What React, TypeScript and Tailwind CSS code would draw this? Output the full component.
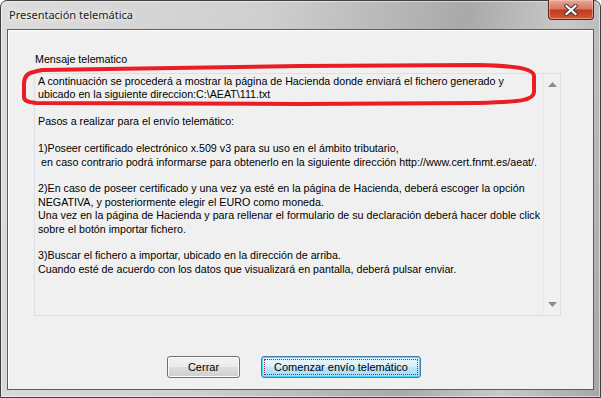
import React from "react";

const lines = [
  "A continuación se procederá a mostrar la página de Hacienda donde enviará el fichero generado y",
  "ubicado en la siguiente direccion:C:\\AEAT\\111.txt",
  "",
  "Pasos a realizar para el envío telemático:",
  "",
  "1)Poseer certificado electrónico x.509 v3 para su uso en el ámbito tributario,",
  " en caso contrario podrá informarse para obtenerlo en la siguiente dirección http://www.cert.fnmt.es/aeat/.",
  "",
  "2)En caso de poseer certificado y una vez ya esté en la página de Hacienda, deberá escoger la opción",
  "NEGATIVA, y posteriormente elegir el EURO como moneda.",
  "Una vez en la página de Hacienda y para rellenar el formulario de su declaración deberá hacer doble click",
  "sobre el botón importar fichero.",
  "",
  "3)Buscar el fichero a importar, ubicado en la dirección de arriba.",
  "Cuando esté de acuerdo con los datos que visualizará en pantalla, deberá pulsar enviar.",
];

function CloseButton() {
  return (
    <div className="flex h-[20px] w-[46px] items-center justify-center rounded-b-[4px] border border-t-0 border-[#5b2418] bg-[linear-gradient(to_bottom,#e9a894_0%,#d9785f_45%,#c0391f_55%,#d4583a_100%)] shadow-[inset_0_0_0_1px_rgba(255,220,210,0.45)]">
      <svg width="14" height="12" viewBox="0 0 14 12">
        <path d="M2.5 2 L11.5 10 M11.5 2 L2.5 10" stroke="#3a3a3a" strokeWidth="4.2" strokeLinecap="square" />
        <path d="M2.5 2 L11.5 10 M11.5 2 L2.5 10" stroke="#ffffff" strokeWidth="2.2" strokeLinecap="square" />
      </svg>
    </div>
  );
}

function Arrow({ up }: { up?: boolean }) {
  return (
    <svg width="9" height="5" viewBox="0 0 9 5">
      <path d={up ? "M0 5 L4.5 0 L9 5 Z" : "M0 0 L4.5 5 L9 0 Z"} fill="#8d8d8d" />
    </svg>
  );
}

export default function App() {
  return (
    <div className="relative h-[398px] w-[601px] overflow-hidden bg-white font-['Liberation_Sans',Arial,sans-serif]">
      <div className="flex h-full w-full flex-col rounded-t-[7px] border border-[#3f3f3f] bg-[linear-gradient(100deg,#dcdcdc_0%,#cfcfcf_40%,#a9a9a9_70%,#c9c9c9_85%,#a6a6a6_100%)] px-[6px] pb-[7px] shadow-[inset_0_0_0_1px_rgba(255,255,255,0.5)]">
        <div className="flex h-[28px] items-start justify-between">
          <div className="pl-[2px] pt-[6px] font-['Noto_Sans',sans-serif] text-[11px] leading-[15px] text-[#1c1c1c] [text-shadow:0_0_8px_#ffffff,0_0_4px_#ffffff]">
            Presentación telemática
          </div>
          <div className="-mt-px">
            <CloseButton />
          </div>
        </div>
        <div className="flex flex-1 flex-col border border-[#5c5c5c] bg-[#f0f0f0] text-[10.7px] text-black shadow-[inset_1px_1px_0_#ffffff]">
          <div className="ml-[27px] mt-[23px] leading-[13px]">Mensaje telematico</div>
          <div className="ml-[26px] mt-[7px] flex h-[243px] w-[527px] border border-[#dcdfe6] bg-[#f0f0f0]">
            <div className="flex-1 overflow-hidden pl-[3px] pt-[1px] leading-[13.43px]">
              {lines.map((l, i) => (
                <div key={i} className="h-[13.43px] whitespace-pre">
                  {l}
                </div>
              ))}
            </div>
            <div className="flex w-[17px] flex-col items-center justify-between border-l border-[#e6e6e6] bg-[#f0f0f0] py-[8px]">
              <Arrow up />
              <Arrow />
            </div>
          </div>
          <div className="mt-[40px] flex gap-[21px] pl-[159px] text-[11px]">
            <div className="flex h-[22px] w-[73px] items-center justify-center rounded-[3px] border border-[#707070] bg-[linear-gradient(to_bottom,#f2f2f2_0%,#ebebeb_50%,#dddddd_50%,#cfcfcf_100%)] shadow-[inset_0_0_0_1px_#fcfcfc]">
              Cerrar
            </div>
            <div className="flex h-[22px] w-[160px] items-center justify-center rounded-[3px] border border-[#3c7fb1] bg-[linear-gradient(to_bottom,#eaf6fd_0%,#d9f0fc_50%,#bee6fd_50%,#a7d9f5_100%)] p-[2px] shadow-[inset_0_0_0_1px_#48d4ff]">
              <div className="flex h-full w-full items-center justify-center border border-dotted border-[#7a3b3b]">
                Comenzar envío telemático
              </div>
            </div>
          </div>
        </div>
      </div>
      <svg className="pointer-events-none absolute left-0 top-0" width="601" height="398" viewBox="0 0 601 398">
        <path
          d="M34 72 C27 73 24 77 24 84 L24 97 C24 101 28 102 36 103 L300 104 L478 103 C522 102 534 100 534 92 L534 76 C534 70 524 66 478 65 L300 66 L42 70 C38 71 36 71 34 72 Z"
          fill="none"
          stroke="#ea1c24"
          strokeWidth="4"
          strokeLinejoin="round"
        />
      </svg>
    </div>
  );
}
